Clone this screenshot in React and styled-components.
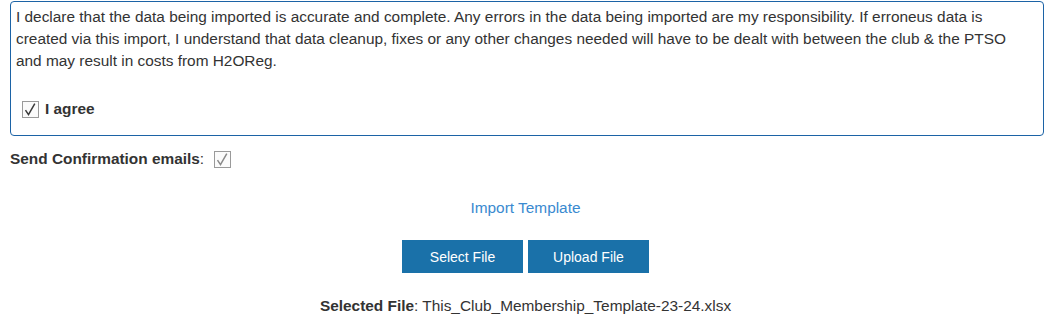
import React from "react";
import styled, { createGlobalStyle } from "styled-components";

const GlobalStyle = createGlobalStyle`
  body {
    margin: 0;
    background: #fff;
    font-family: "Liberation Sans", Arial, sans-serif;
    font-size: 15.4px;
    color: #333;
  }
`;

const Page = styled.div`
  padding: 1px 10px 0 10px;
  width: 1034px;
`;

const Declaration = styled.div`
  border: 1px solid #1c63a6;
  border-radius: 4px;
  padding: 4px 22px 17px 5px;
`;

const Statement = styled.p`
  margin: 0;
  line-height: 22px;
`;

const CheckRow = styled.label`
  display: flex;
  align-items: center;
  gap: ${(p) => p.gap || 6}px;
  margin: ${(p) => p.margin || 0};
  font-weight: ${(p) => (p.bold ? 700 : 400)};
  line-height: 18px;
`;

const Box = styled.span`
  display: inline-flex;
  align-items: center;
  justify-content: center;
  width: 15px;
  height: 15px;
  border: 1px solid #9a9a9a;
  background: #fbfbfb;
  box-sizing: content-box;
`;

const Check = ({ tone }) => (
  <Box>
    <svg width="15" height="15" viewBox="0 0 15 15">
      <path
        d="M2.5 8.2 L5.5 12.6 L11.8 1.6"
        fill="none"
        stroke={tone}
        strokeWidth="1.5"
        strokeLinejoin="miter"
      />
    </svg>
  </Box>
);

const Center = styled.div`
  display: flex;
  justify-content: center;
  padding-right: 3px;
  margin-top: ${(p) => p.top}px;
`;

const TemplateLink = styled.a`
  color: #3a8ad0;
  text-decoration: none;
  line-height: 18px;
  cursor: pointer;
`;

const Buttons = styled.div`
  display: flex;
  gap: 5px;
`;

const Button = styled.button`
  width: 121px;
  height: 33px;
  border: none;
  border-radius: 0;
  background: #1a71a9;
  color: #fff;
  font-family: "Liberation Sans", Arial, sans-serif;
  font-size: 14px;
  cursor: pointer;
`;

const FileLine = styled.div`
  line-height: 18px;
`;

export default function App() {
  return (
    <>
      <GlobalStyle />
      <Page>
        <Declaration>
          <Statement>
            I declare that the data being imported is accurate and complete. Any errors in the data being
            imported are my responsibility. If erroneus data is created via this import, I understand that
            data cleanup, fixes or any other changes needed will have to be dealt with between the club &amp;
            the PTSO and may result in costs from H2OReg.
          </Statement>
          <CheckRow bold margin="28px 0 0 6px">
            <Check tone="#3a3a3a" />
            I agree
          </CheckRow>
        </Declaration>
        <CheckRow margin="14px 0 0 0" gap={10}>
          <span>
            <b>Send Confirmation emails</b>:
          </span>
          <Check tone="#8a8a8a" />
        </CheckRow>
        <Center top={31}>
          <TemplateLink>Import Template</TemplateLink>
        </Center>
        <Center top={23}>
          <Buttons>
            <Button>Select File</Button>
            <Button>Upload File</Button>
          </Buttons>
        </Center>
        <Center top={24}>
          <FileLine>
            <b>Selected File</b>: This_Club_Membership_Template-23-24.xlsx
          </FileLine>
        </Center>
      </Page>
    </>
  );
}
